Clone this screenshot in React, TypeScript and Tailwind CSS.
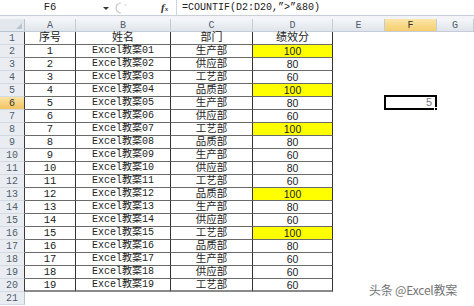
const depts = ['生产部', '供应部', '工艺部', '品质部']
const scores = [100, 80, 60, 100, 80, 60, 100, 80, 60, 80, 60, 100, 80, 60, 100, 80, 60, 60, 60]

const mono = "font-['Liberation_Mono','Noto_Sans_CJK_SC',monospace]"
const hdrCell = 'h-[13px] leading-[13px] text-center text-[10px] text-[#4f5d6e]'

const RowHeader = ({ n, inTable, selected }: { n: number; inTable: boolean; selected?: boolean }) => (
  <div
    className={`${hdrCell} ${mono} w-[25px] shrink-0 border-b border-b-[#d3dae3] border-r ${
      inTable ? 'border-r-[#3a3a3a]' : 'border-r-[#b9c3cf]'
    } ${selected ? 'bg-gradient-to-b from-[#fbe3a4] to-[#f3c35e] text-[#333]' : 'bg-[#e9edf2]'}`}
  >
    {n}
  </div>
)

export default function App() {
  return (
    <div className="relative w-[474px] h-[306px] overflow-hidden bg-white text-[#222]">
      {/* formula bar */}
      <div className="flex items-center h-[16px] border-b border-[#c9d0d9] bg-white">
        <div className={`w-[100px] text-center text-[10.5px] ${mono}`}>F6</div>
        <svg width="8" height="8" viewBox="0 0 8 8" className="ml-[2px]">
          <path d="M1 3 L7 3 L4 6 Z" fill="#333" />
        </svg>
        <svg width="16" height="14" viewBox="0 0 16 14" className="ml-[5px]">
          <path d="M6 2 A5 5 0 0 0 6 12" fill="none" stroke="#c4c8cc" strokeWidth="1.2" />
          <path d="M9 4 L12 4" stroke="#d6d9dc" strokeWidth="1" />
        </svg>
        <div className="ml-[30px] w-[14px] flex items-end font-['Liberation_Serif',serif] italic font-bold text-[#333]">
          <span className="text-[11px] leading-none">f</span>
          <span className="text-[7px] leading-none">x</span>
        </div>
        <div className="ml-[1px] w-px h-[16px] bg-[#d0d5db]" />
        <div className={`ml-[5px] text-[10px] ${mono}`}>=COUNTIF(D2:D20,”&gt;”&amp;80)</div>
      </div>
      <div className="h-[3px] bg-[#f2f4f7]" />

      {/* column headers */}
      <div className="flex h-[13px]">
        <div className="relative w-[25px] shrink-0 border-r border-b border-[#b9c3cf] bg-[#e3e8ee]">
          <svg width="6" height="6" viewBox="0 0 6 6" className="absolute right-[2px] bottom-[2px]">
            <path d="M6 0 L6 6 L0 6 Z" fill="#bcc3cc" />
          </svg>
        </div>
        {[
          ['A', 'w-[51px]'],
          ['B', 'w-[95px]'],
          ['C', 'w-[82px]'],
          ['D', 'w-[80px]'],
          ['E', 'w-[52px]'],
          ['F', 'w-[52px]'],
          ['G', 'flex-1'],
        ].map(([l, w]) => (
          <div
            key={l}
            className={`${hdrCell} ${mono} ${w} shrink-0 border-r border-b border-[#c3ccd7] ${
              l === 'F'
                ? 'bg-gradient-to-b from-[#fce6a8] to-[#f5cd6c] text-[#333]'
                : 'bg-gradient-to-b from-[#f4f6f9] to-[#e0e5eb]'
            }`}
          >
            {l}
          </div>
        ))}
      </div>

      {/* row 1: titles */}
      <div className="flex h-[13px]">
        <RowHeader n={1} inTable />
        {[
          ['序号', 'w-[51px]'],
          ['姓名', 'w-[95px]'],
          ['部门', 'w-[82px]'],
          ['绩效分', 'w-[80px]'],
        ].map(([t, w]) => (
          <div
            key={t}
            className={`${w} h-[13px] leading-[12px] shrink-0 text-center text-[11px] ${mono} border-r border-r-[#333] border-b border-b-[#6a6a6a]`}
          >
            {t}
          </div>
        ))}
      </div>

      {/* data rows */}
      {scores.map((s, i) => {
        const row = i + 2
        const last = row === 20
        const hb = last ? 'border-b-2 border-b-[#8a8a8a]' : 'border-b border-b-[#6a6a6a]'
        return (
          <div key={row} className="flex h-[13px]">
            <RowHeader n={row} inTable selected={row === 6} />
            <div className={`w-[51px] shrink-0 text-center text-[10.5px] leading-[12px] ${mono} border-r border-r-[#333] ${hb}`}>
              {i + 1}
            </div>
            <div className={`w-[95px] shrink-0 text-center text-[10px] leading-[12px] ${mono} border-r border-r-[#333] ${hb}`}>
              Excel教案{String(i + 1).padStart(2, '0')}
            </div>
            <div className={`w-[82px] shrink-0 text-center text-[10.5px] leading-[12px] ${mono} border-r border-r-[#333] ${hb}`}>
              {depts[i % 4]}
            </div>
            <div
              className={`w-[80px] shrink-0 text-center text-[10.5px] leading-[12px] font-['Liberation_Sans',sans-serif] border-r border-r-[#333] ${hb} ${
                s === 100 ? 'bg-[#ffff00]' : ''
              }`}
            >
              {s}
            </div>
            <div className="w-[52px] shrink-0" />
            <div className="relative w-[52px] shrink-0">
              {row === 6 && (
                <div className="absolute -left-[1px] -top-[2px] w-[53px] h-[15px] border-2 border-black text-right pr-[3px] text-[11px] leading-[11px] text-[#777] font-['Liberation_Sans',sans-serif]">
                  5
                  <div className="absolute -right-[3px] -bottom-[3px] w-[4px] h-[4px] bg-black border border-white" />
                </div>
              )}
            </div>
          </div>
        )
      })}

      {/* row 21 */}
      <div className="flex h-[13px]">
        <RowHeader n={21} inTable={false} />
      </div>

      {/* watermark */}
      <div className="absolute left-[369px] top-[281px] text-[12px] text-[#666] font-['Noto_Sans_CJK_SC',sans-serif] tracking-[-0.2px] opacity-90">
        头条 @Excel教案
      </div>
    </div>
  )
}
